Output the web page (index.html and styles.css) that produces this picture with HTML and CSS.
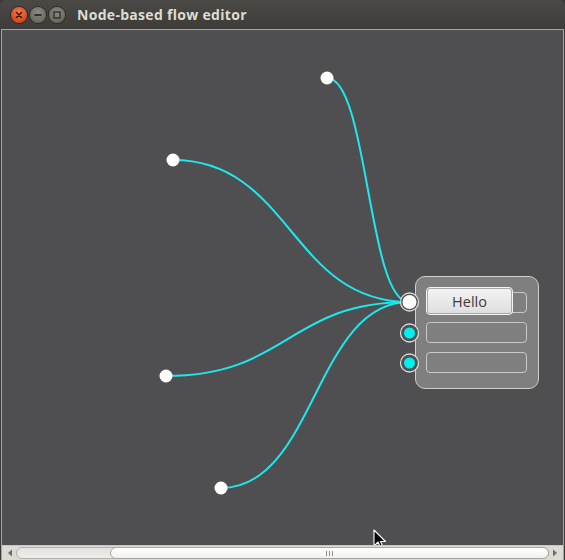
FILE: index.html
```html
<!DOCTYPE html>
<html>
<head>
<meta charset="utf-8">
<link rel="stylesheet" href="styles.css">
</head>
<body>
<div class="window">
  <div class="titlebar">
    <div class="controls">
      <span class="wbtn close"><svg width="16" height="16" viewBox="0 0 16 16"><path d="M5.5 5.5 L10.5 10.5 M10.5 5.5 L5.5 10.5" stroke="#3a1a0c" stroke-width="1.6" stroke-linecap="round"/></svg></span>
      <span class="wbtn min"><svg width="16" height="16" viewBox="0 0 16 16"><path d="M4.5 8 H11.5" stroke="#2f2f2d" stroke-width="1.8"/></svg></span>
      <span class="wbtn max"><svg width="16" height="16" viewBox="0 0 16 16"><rect x="5" y="5" width="6" height="6" fill="none" stroke="#2f2f2d" stroke-width="1.4"/></svg></span>
    </div>
    <div class="title">Node-based flow editor</div>
  </div>
  <div class="frame">
    <div class="canvas">
      <div class="node">
        <div class="field"><button class="hello">Hello</button></div>
        <div class="field"></div>
        <div class="field"></div>
      </div>
      <svg class="wires" viewBox="2 30 561 515" width="561" height="515">
        <g fill="none" stroke="#1de8ee" stroke-width="2">
          <path d="M327 78 C368 78 368 302 409 302"/>
          <path d="M173 160 C291 160 291 302 409 302"/>
          <path d="M166 376 C288 376 288 302 409 302"/>
          <path d="M221 488 C315 488 315 302 409 302"/>
        </g>
        <g fill="#ffffff">
          <circle cx="327" cy="78" r="6.5"/>
          <circle cx="173" cy="160" r="6.5"/>
          <circle cx="166" cy="376" r="6.5"/>
          <circle cx="221" cy="488" r="6.5"/>
        </g>
        <g stroke="#d8d8d8" stroke-width="1.3" fill="#505052">
          <circle cx="409.5" cy="302" r="9"/>
          <circle cx="409.5" cy="333" r="9"/>
          <circle cx="409.5" cy="363" r="9"/>
        </g>
        <circle cx="409.5" cy="302" r="7" fill="#ffffff"/>
        <circle cx="409.5" cy="333" r="5.5" fill="#00f0f0"/>
        <circle cx="409.5" cy="363" r="5.5" fill="#00f0f0"/>
      </svg>
      <svg class="cursor" width="14" height="22" viewBox="0 0 14 22">
        <path d="M1 1 L1 17 L5 13 L8 20 L10.5 19 L7.5 12.5 L12.5 12.5 Z" fill="#000" stroke="#fff" stroke-width="1.1" stroke-linejoin="round"/>
      </svg>
    </div>
    <div class="hscroll">
      <span class="arrow left"><svg width="6" height="8" viewBox="0 0 6 8"><path d="M5 0.5 L1 4 L5 7.5 Z" fill="#6e6c68"/></svg></span>
      <div class="trough">
        <div class="thumb"><span class="grip"></span><span class="grip"></span><span class="grip"></span></div>
      </div>
      <span class="arrow right"><svg width="6" height="8" viewBox="0 0 6 8"><path d="M1 0.5 L5 4 L1 7.5 Z" fill="#6e6c68"/></svg></span>
    </div>
  </div>
</div>
</body>
</html>
```

FILE: styles.css
```css
html, body {
  margin: 0;
  padding: 0;
  background: #3c3b37;
}
.window {
  width: 565px;
  height: 560px;
  display: flex;
  flex-direction: column;
  background: #3c3b37;
  border-top-right-radius: 6px;
  border-top-left-radius: 6px;
  overflow: hidden;
}
.titlebar {
  height: 29px;
  flex: none;
  display: flex;
  align-items: center;
  background: linear-gradient(#4a4945, #3d3c38);
}
.controls {
  display: flex;
  gap: 3px;
  margin-left: 11px;
  margin-top: 1px;
}
.wbtn {
  width: 16px;
  height: 16px;
  border-radius: 50%;
  display: flex;
}
.close {
  background: radial-gradient(circle at 50% 35%, #f57c4b, #d8461c 70%, #b7380f);
  box-shadow: 0 0 0 1px #2c2b28;
}
.min, .max {
  background: radial-gradient(circle at 50% 35%, #8b8a84, #6a6964 70%, #55544f);
  box-shadow: 0 0 0 1px #2c2b28;
}
.title {
  margin-left: 12px;
  font-family: "Open Sans", "DejaVu Sans", sans-serif;
  font-weight: 700;
  font-size: 14px;
  color: #dfdbd2;
  letter-spacing: 0.3px;
}
.frame {
  flex: 1;
  display: flex;
  flex-direction: column;
  margin: 0 1px;
  border: 1px solid #a5a5a5;
  border-bottom: none;
}
.canvas {
  flex: 1;
  position: relative;
  background: #4f4f51;
  overflow: hidden;
}
.wires {
  position: absolute;
  left: 0;
  top: 0;
  pointer-events: none;
}
.node {
  position: absolute;
  left: 413px;
  top: 246px;
  width: 122px;
  height: 111px;
  background: #7f7f7f;
  border: 1px solid #cfcfcf;
  border-radius: 10px;
  box-sizing: content-box;
  display: flex;
  flex-direction: column;
  gap: 9px;
}
.field {
  position: relative;
  margin-left: 10px;
  width: 99px;
  height: 19px;
  border: 1px solid #c9c9c9;
  border-radius: 4px;
}
.field:first-child {
  margin-top: 15px;
}
.hello {
  position: absolute;
  left: 0;
  top: -5px;
  width: 85px;
  height: 26px;
  margin: 0;
  padding: 0;
  border: 1px solid #a8a8a8;
  outline: 1px solid #f4f4f4;
  border-radius: 3px;
  background: linear-gradient(#f3f3f3, #dedede);
  font-family: "Open Sans", "DejaVu Sans", sans-serif;
  font-size: 14.5px;
  color: #3c3c3c;
}
.cursor {
  position: absolute;
  left: 371px;
  top: 499px;
}
.hscroll {
  height: 15px;
  flex: none;
  display: flex;
  align-items: center;
  background: #dcdad5;
  border-top: 1px solid #c9c6c1;
  box-sizing: border-box;
}
.arrow {
  width: 12px;
  display: flex;
  justify-content: center;
}
.arrow.left { margin-left: 2px; }
.arrow.right { margin-right: 2px; }
.trough {
  flex: 1;
  height: 12px;
  border: 1px solid #b3b0ab;
  border-radius: 7px;
  background: linear-gradient(#e4e2de, #efedea);
  display: flex;
  justify-content: flex-end;
  box-sizing: border-box;
}
.thumb {
  width: 437px;
  height: 100%;
  margin-right: -1px;
  margin-top: -1px;
  box-sizing: content-box;
  border: 1px solid #a9a6a1;
  border-radius: 7px;
  background: linear-gradient(#ffffff, #f1f0ee);
  display: flex;
  justify-content: center;
  align-items: center;
  gap: 2px;
}
.grip {
  width: 1px;
  height: 5px;
  background: #8d8b87;
}
```
